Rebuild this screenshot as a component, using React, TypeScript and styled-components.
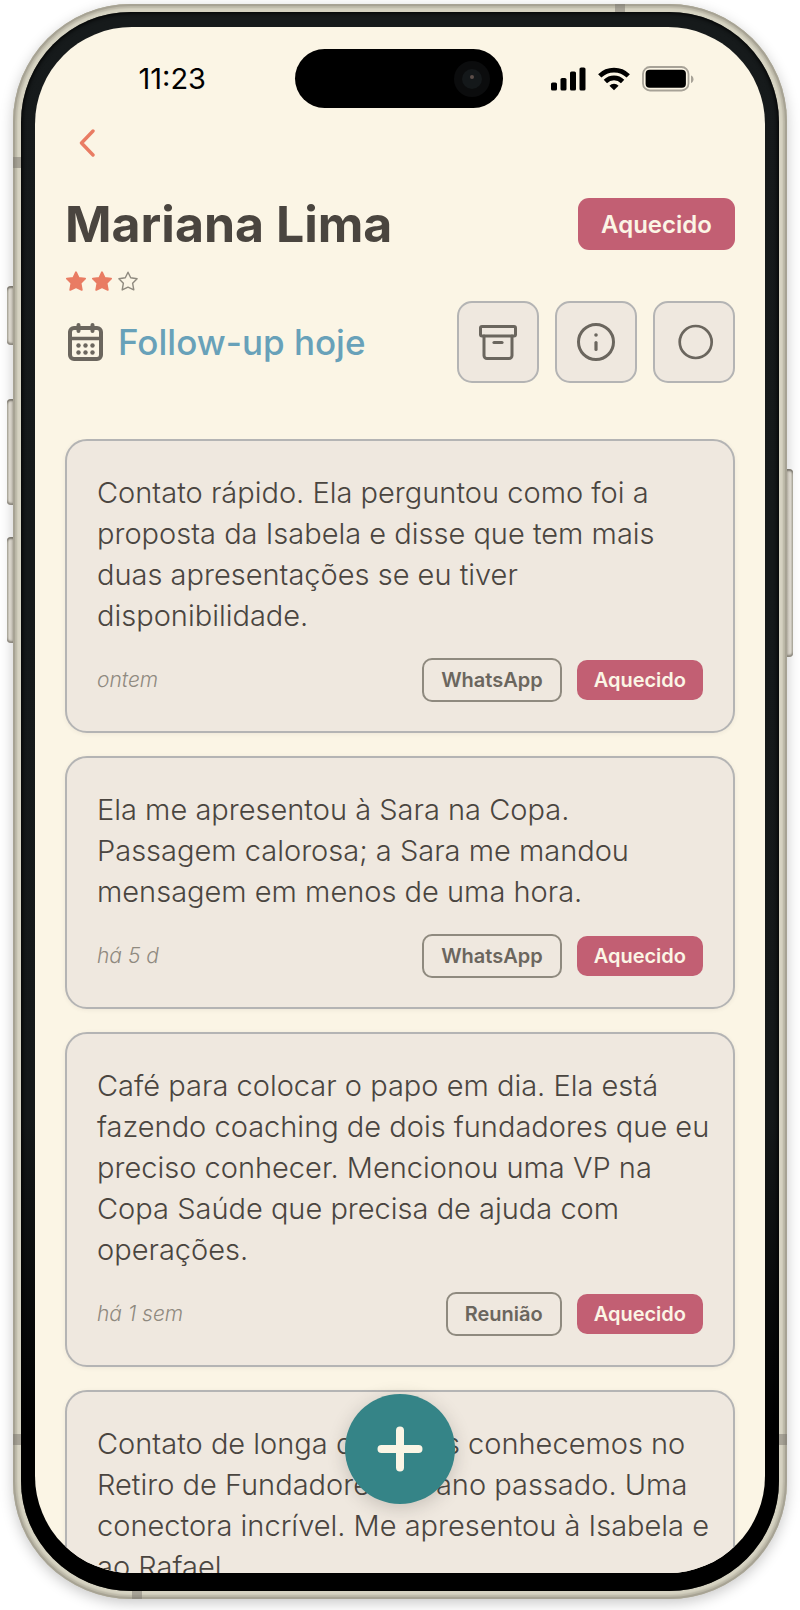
import React from "react";
import styled, { createGlobalStyle, css } from "styled-components";

const color = {
  paper: "#fbf5e5",
  card: "#efe8df",
  line: "#b4b4b4",
  ink: "#4a453f",
  muted: "#6b665e",
  faint: "#8f8a7f",
  coral: "#e97c63",
  rose: "#c25f73",
  blue: "#68a1b9",
  teal: "#358487",
};

const GlobalStyle = createGlobalStyle`
  *, *::before, *::after { box-sizing: border-box; }
  body {
    margin: 0;
    background: #ffffff;
    font-family: Inter, "Liberation Sans", sans-serif;
    color: ${color.ink};
  }
  button { font: inherit; color: inherit; padding: 0; cursor: pointer; }
  h1, p { margin: 0; }
`;

/* ---------- device ---------- */

const Stage = styled.div`
  height: 100vh;
  min-height: 900px;
  padding: 4px 13px 11px;
  display: flex;
`;

const Frame = styled.div`
  position: relative;
  flex: 1;
  min-width: 0;
  display: flex;
  padding: 8px;
  border-radius: 118px;
  background: #d6d3c2;
  box-shadow:
    inset 0 0 0 2px #a7a394,
    inset 0 0 2px 4px #b9b5a5,
    0 4px 14px rgba(0, 0, 0, 0.22);
`;

const Bezel = styled.div`
  flex: 1;
  min-width: 0;
  display: flex;
  padding: 15px 14px 18px;
  border-radius: 110px;
  background: linear-gradient(#161a1b, #141819 70%, #000000 90%);
  box-shadow: inset 0 0 4px 1px #000000;
`;

const Screen = styled.main`
  position: relative;
  flex: 1;
  min-width: 0;
  display: flex;
  flex-direction: column;
  overflow: hidden;
  border-radius: 97px;
  background: ${color.paper};
`;

type Side = "left" | "right";

const SideKey = styled.span<{ $side: Side; $top: number; $height: number }>`
  position: absolute;
  ${(p) => p.$side}: -6px;
  top: ${(p) => p.$top}px;
  width: 6px;
  height: ${(p) => p.$height}px;
  border-radius: ${(p) => (p.$side === "left" ? "4px 0 0 4px" : "0 4px 4px 0")};
  background: linear-gradient(
    to ${(p) => p.$side},
    #bbb6ab,
    #dedad0 55%,
    #a9a59a
  );
  box-shadow: inset 0 3px 2px -1px #77736a, inset 0 -3px 2px -1px #8b877d;
`;

const Band = styled.span<{ $edge: "top" | "bottom" | Side; $at: string }>`
  position: absolute;
  background: rgba(120, 115, 108, 0.5);
  ${(p) =>
    p.$edge === "left" || p.$edge === "right"
      ? css`
          ${p.$edge}: 0;
          top: ${p.$at};
          width: 8px;
          height: 11px;
        `
      : css`
          ${p.$edge}: 0;
          left: ${p.$at};
          width: 10px;
          height: 8px;
        `}
`;

/* ---------- status bar ---------- */

const StatusBar = styled.div`
  flex: none;
  display: grid;
  grid-template-columns: 1fr 208px 1fr;
  align-items: center;
  padding: 22px 2px 0 0;
  color: #000000;
`;

const Clock = styled.time`
  padding-right: 89px;
  text-align: right;
  font-size: 29px;
  line-height: 36px;
  white-space: nowrap;
`;

const Island = styled.div`
  height: 59px;
  padding-right: 12px;
  display: flex;
  align-items: center;
  justify-content: flex-end;
  border-radius: 30px;
  background: #000000;
`;

const StatusIcons = styled.div`
  display: flex;
  align-items: center;
  gap: 12px;
  padding-left: 48px;
`;

/* ---------- header ---------- */

const Nav = styled.nav`
  flex: none;
  height: 70px;
  padding: 0 30px;
  display: flex;
  align-items: center;
`;

const BackButton = styled.button`
  width: 44px;
  height: 44px;
  display: grid;
  place-items: center;
  border: 0;
  background: none;
`;

const Header = styled.header`
  flex: none;
  padding: 16px 30px 0;
  display: flex;
  flex-direction: column;
`;

const Row = styled.div`
  display: flex;
  align-items: center;
  justify-content: space-between;
`;

const Name = styled.h1`
  font-size: 50px;
  line-height: 60px;
  font-weight: 700;
  white-space: nowrap;
`;

const StatusBadge = styled.button`
  height: 52px;
  width: 157px;
  padding-top: 2px;
  border: 0;
  border-radius: 11px;
  background: ${color.rose};
  color: ${color.paper};
  font-size: 24px;
  line-height: 30px;
  font-weight: 600;
`;

const Stars = styled.div`
  margin: 17px 0 10px;
  display: flex;
  gap: 4px;
`;

const FollowUp = styled.button`
  display: flex;
  align-items: center;
  gap: 13px;
  border: 0;
  background: none;
  color: ${color.blue};
  font-size: 35px;
  line-height: 44px;
  font-weight: 500;
  white-space: nowrap;
`;

const Actions = styled.div`
  display: flex;
  gap: 16px;
`;

const ActionButton = styled.button`
  width: 82px;
  height: 82px;
  display: grid;
  place-items: center;
  border: 2px solid ${color.line};
  border-radius: 15px;
  background: ${color.card};
`;

/* ---------- interactions ---------- */

const Feed = styled.section`
  flex: 1;
  min-height: 0;
  margin-top: 56px;
  padding: 0 30px;
  display: flex;
  flex-direction: column;
  gap: 23px;
  overflow-y: auto;
  scrollbar-width: none;
`;

const Card = styled.article`
  flex: none;
  padding: 31px 20px 29px 30px;
  border: 2px solid ${color.line};
  border-radius: 22px;
  background: ${color.card};
  box-shadow: 0 1px 4px rgba(80, 70, 60, 0.08);
`;

const Note = styled.p`
  font-size: 29px;
  line-height: 41px;
  font-weight: 300;
`;

const Meta = styled.div`
  margin-top: 22px;
  padding-right: 10px;
  display: flex;
  align-items: center;
  gap: 15px;
`;

const When = styled.time`
  flex: 1;
  color: ${color.faint};
  font-size: 21px;
  line-height: 26px;
  font-weight: 300;
  font-style: italic;
`;

const Chip = styled.span<{ $filled?: boolean }>`
  display: flex;
  align-items: center;
  height: ${(p) => (p.$filled ? 40 : 44)}px;
  padding: 0 17px;
  border: ${(p) => (p.$filled ? "0" : `2px solid ${color.faint}`)};
  border-radius: 10px;
  background: ${(p) => (p.$filled ? color.rose : "transparent")};
  color: ${(p) => (p.$filled ? color.paper : color.muted)};
  font-size: 20px;
  line-height: 26px;
  font-weight: 600;
`;

const AddButton = styled.button`
  position: absolute;
  left: 50%;
  bottom: 69px;
  transform: translateX(-50%);
  width: 110px;
  height: 110px;
  display: grid;
  place-items: center;
  border: 0;
  border-radius: 50%;
  background: ${color.teal};
  box-shadow: 0 4px 18px rgba(60, 55, 50, 0.22);
`;

/* ---------- drawings ---------- */

const Camera = () => (
  <svg width="38" height="38" viewBox="0 0 38 38" aria-hidden="true">
    <circle cx="19" cy="19" r="18" fill="#0b0c0d" />
    <circle cx="19" cy="19" r="10" fill="#14181a" />
    <circle cx="19" cy="17" r="2" fill="#5c4f4a" />
  </svg>
);

const Signal = () => (
  <svg width="35" height="24" viewBox="0 0 35 24" aria-hidden="true">
    <rect x="0" y="15.500" width="6" height="8" rx="1.6" />
    <rect x="9.5" y="11" width="6" height="12.5" rx="1.6" />
    <rect x="19" y="4.500" width="6" height="19" rx="1.6" />
    <rect x="28.500" y="0.500" width="6" height="23" rx="1.6" />
  </svg>
);

const Wifi = () => (
  <svg width="32" height="24" viewBox="0 0 33 24" aria-hidden="true">
    <g fill="none" stroke="#000000" strokeWidth="4.800">
      <path d="M1.800 8.800a21 21 0 0 1 29.400 0" />
      <path d="M7.600 14.600a12.600 12.600 0 0 1 17.800 0" />
    </g>
    <path d="M16.500 23.700l-4.700-4.800a6.700 6.700 0 0 1 9.400 0z" />
  </svg>
);

const Battery = () => (
  <svg width="52" height="26" viewBox="0 0 52 26" aria-hidden="true">
    <rect x="1" y="1" width="45.500" height="23.500" rx="7" fill="none" stroke="#a7a297" strokeWidth="1.800" />
    <rect x="3.600" y="3.800" width="40.300" height="18" rx="4" />
    <path d="M49 9.500c3.300 1 3.300 6.600 0 7.600z" fill="#a7a297" />
  </svg>
);

const Chevron = () => (
  <svg width="16" height="28" viewBox="0 0 16 28" fill="none" aria-hidden="true">
    <path d="M14 2L2.500 14L14 26" stroke={color.coral} strokeWidth="3.400" strokeLinecap="round" strokeLinejoin="round" />
  </svg>
);

const Star = ({ on }: { on: boolean }) => (
  <svg width="22" height="20" viewBox="0 0 22 20" aria-hidden="true">
    <path
      d="M11 1.200L13.700 6.800L20.100 7.700L15.600 12.200L16.800 18.900L11 16.100L5.200 18.900L6.400 12.200L1.900 7.700L8.300 6.800Z"
      fill={on ? color.coral : "none"}
      stroke={on ? color.coral : color.faint}
      strokeWidth={on ? 1.8 : 1.4}
      strokeLinejoin="round"
    />
  </svg>
);

const Calendar = () => (
  <svg width="40" height="40" viewBox="0 0 40 40" fill="none" aria-hidden="true">
    <g stroke={color.muted} strokeWidth="4" strokeLinecap="round">
      <rect x="5" y="6" width="31" height="31" rx="4" />
      <path d="M13.500 3v6M27.500 3v6" />
      <path d="M5 16.500h31" strokeWidth="3.400" />
    </g>
    <g fill={color.muted}>
      {[13.5, 20.5, 27.5].map((x) => (
        <React.Fragment key={x}>
          <circle cx={x} cy="23.500" r="2.200" />
          <circle cx={x} cy="30.500" r="2.200" />
        </React.Fragment>
      ))}
    </g>
  </svg>
);

const Archive = () => (
  <svg width="40" height="40" viewBox="0 0 40 40" fill="none" aria-hidden="true">
    <g stroke={color.muted} strokeWidth="3" strokeLinecap="round" strokeLinejoin="round">
      <rect x="2.500" y="4.500" width="35" height="9.500" rx="1.500" />
      <path d="M6 14v19.500a3 3 0 0 0 3 3h22a3 3 0 0 0 3-3V14" />
      <path d="M16 20.500h8" strokeWidth="3.200" />
    </g>
  </svg>
);

const Info = () => (
  <svg width="40" height="40" viewBox="0 0 40 40" fill="none" aria-hidden="true">
    <circle cx="20" cy="20" r="17.500" stroke={color.muted} strokeWidth="3" />
    <circle cx="20" cy="13" r="1.800" fill={color.muted} />
    <path d="M20 20.500v7" stroke={color.muted} strokeWidth="3.200" strokeLinecap="round" />
  </svg>
);

const Ring = () => (
  <svg width="40" height="40" viewBox="0 0 40 40" fill="none" aria-hidden="true">
    <circle cx="21.700" cy="20" r="16" stroke={color.muted} strokeWidth="2.700" />
  </svg>
);

const Plus = () => (
  <svg width="46" height="46" viewBox="0 0 46 46" aria-hidden="true">
    <path d="M23 4.500v37M4.500 23h37" stroke={color.paper} strokeWidth="8" strokeLinecap="round" />
  </svg>
);

/* ---------- data ---------- */

interface Interaction {
  note: string;
  when: string;
  channel: string;
}

const interactions: Interaction[] = [
  {
    note: "Contato rápido. Ela perguntou como foi a proposta da Isabela e disse que tem mais duas apresentações se eu tiver disponibilidade.",
    when: "ontem",
    channel: "WhatsApp",
  },
  {
    note: "Ela me apresentou à Sara na Copa. Passagem calorosa; a Sara me mandou mensagem em menos de uma hora.",
    when: "há 5 d",
    channel: "WhatsApp",
  },
  {
    note: "Café para colocar o papo em dia. Ela está fazendo coaching de dois fundadores que eu preciso conhecer. Mencionou uma VP na Copa Saúde que precisa de ajuda com operações.",
    when: "há 1 sem",
    channel: "Reunião",
  },
  {
    note: "Contato de longa data; nos conhecemos no Retiro de Fundadores do ano passado. Uma conectora incrível. Me apresentou à Isabela e ao Rafael.",
    when: "há 1 mês",
    channel: "Reunião",
  },
];

export default function App() {
  return (
    <>
      <GlobalStyle />
      <Stage>
        <Frame>
          <SideKey $side="left" $top={282} $height={59} />
          <SideKey $side="left" $top={395} $height={106} />
          <SideKey $side="left" $top={533} $height={106} />
          <SideKey $side="right" $top={465} $height={188} />
          <Band $edge="left" $at="153px" />
          <Band $edge="left" $at="calc(100% - 165px)" />
          <Band $edge="right" $at="calc(100% - 165px)" />
          <Band $edge="top" $at="calc(100% - 172px)" />
          <Band $edge="bottom" $at="119px" />
          <Bezel>
            <Screen>
              <StatusBar>
                <Clock>11:23</Clock>
                <Island>
                  <Camera />
                </Island>
                <StatusIcons>
                  <Signal />
                  <Wifi />
                  <Battery />
                </StatusIcons>
              </StatusBar>
              <Nav>
                <BackButton aria-label="Voltar">
                  <Chevron />
                </BackButton>
              </Nav>
              <Header>
                <Row>
                  <Name>Mariana Lima</Name>
                  <StatusBadge>Aquecido</StatusBadge>
                </Row>
                <Stars role="img" aria-label="2 de 3 estrelas">
                  <Star on />
                  <Star on />
                  <Star on={false} />
                </Stars>
                <Row>
                  <FollowUp>
                    <Calendar />
                    Follow-up hoje
                  </FollowUp>
                  <Actions>
                    <ActionButton aria-label="Arquivar">
                      <Archive />
                    </ActionButton>
                    <ActionButton aria-label="Informações">
                      <Info />
                    </ActionButton>
                    <ActionButton aria-label="Concluir">
                      <Ring />
                    </ActionButton>
                  </Actions>
                </Row>
              </Header>
              <Feed aria-label="Interações">
                {interactions.map((item) => (
                  <Card key={item.when}>
                    <Note>{item.note}</Note>
                    <Meta>
                      <When>{item.when}</When>
                      <Chip>{item.channel}</Chip>
                      <Chip $filled>Aquecido</Chip>
                    </Meta>
                  </Card>
                ))}
              </Feed>
              <AddButton aria-label="Adicionar interação">
                <Plus />
              </AddButton>
            </Screen>
          </Bezel>
        </Frame>
      </Stage>
    </>
  );
}
